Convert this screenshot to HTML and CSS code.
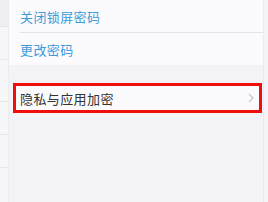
FILE: index.html
```html
<!DOCTYPE html>
<html lang="zh-CN">
<head>
  <meta charset="UTF-8">
  <title>密码设置</title>
  <link rel="stylesheet" href="styles.css">
</head>
<body>
  <div class="page">
    <!-- Barra lateral (borde izquierdo) -->
    <div class="side">
      <div class="side-cell top"></div>
      <div class="side-cell"></div>
      <div class="side-cell tall"></div>
      <div class="side-cell"></div>
      <div class="side-cell"></div>
    </div>

    <!-- Ajustes -->
    <div class="main">
      <div class="group">
        <div class="row"><span class="label link">关闭锁屏密码</span></div>
        <div class="row last"><span class="label link">更改密码</span></div>
      </div>

      <div class="boxed">
        <div class="mark">
          <span class="label">隐私与应用加密</span>
          <svg class="chevron" width="6" height="10" viewBox="0 0 6 10">
            <polyline points="1,1 5,5 1,9" fill="none" stroke="#c8c8cd" stroke-width="1.3"/>
          </svg>
        </div>
      </div>
    </div>
  </div>
</body>
</html>
```

FILE: styles.css
```css
/* General */
body {
  margin: 0;
  padding: 0;
  font-family: "Noto Sans CJK SC", "Noto Sans", sans-serif;
  background: #f3f2f6;
  width: 268px;
  height: 202px;
  overflow: hidden;
}

.page {
  display: flex;
  height: 202px;
}

/* Borde izquierdo */
.side {
  width: 8px;
  display: flex;
  flex-direction: column;
  background: #f7f7f9;
  border-right: 1px solid #ececf0;
}

.side-cell {
  height: 33px;
  border-bottom: 1px solid #e6e6ea;
  box-sizing: border-box;
}

.side-cell.top {
  height: 27px;
  background: #efeff2;
}

.side-cell.tall {
  height: 42px;
}

/* Contenido */
.main {
  flex: 1;
  background: #f3f2f6;
  border-right: 1px solid #ebebef;
  margin-right: 4px;
}

.group {
  background: #fbfafd;
  padding-left: 11px;
}

.row {
  height: 32px;
  display: flex;
  align-items: center;
  border-bottom: 1px solid #e3e3e8;
}

.row.last {
  border-bottom: none;
}

.label {
  font-size: 13px;
  color: #333;
  letter-spacing: 0.4px;
}

.link {
  color: #3d9ad8;
}

/* Fila marcada */
.boxed {
  margin: 18px 1px 0 4px;
}

.mark {
  height: 24px;
  display: flex;
  align-items: center;
  justify-content: space-between;
  background: #fbfafd;
  border: 3px solid #f20d0d;
  padding: 0 5px 0 4px;
}

.chevron {
  display: block;
}
```
